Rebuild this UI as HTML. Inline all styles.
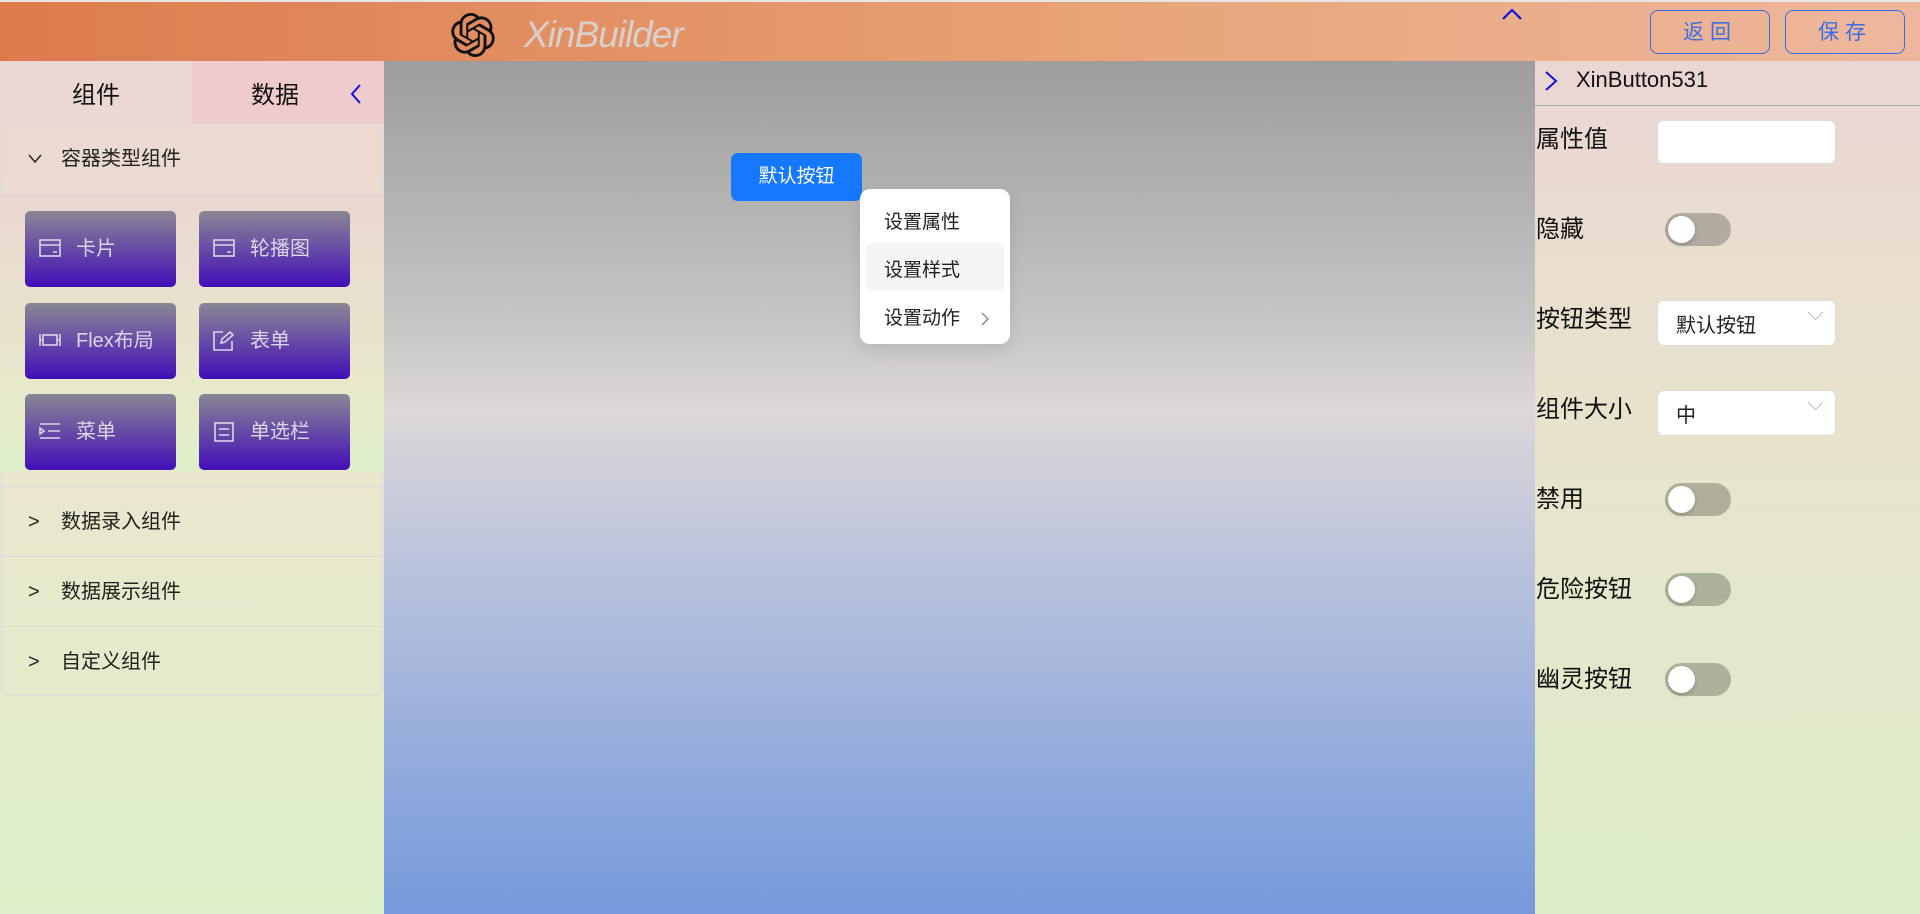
<!DOCTYPE html>
<html><head><meta charset="utf-8"><style>
*{box-sizing:border-box;margin:0;padding:0}
body{width:1920px;height:914px;overflow:hidden;position:relative;font-family:"Liberation Sans","Noto Sans CJK SC",sans-serif;}
.hdr{position:absolute;left:0;top:0;width:1920px;height:61px;background:linear-gradient(90deg,#dd7b4d,#e8a579 60%,#eeb79d);border-top:2px solid #e6e6e6}
.left{position:absolute;left:0;top:61px;width:384px;height:853px;background:linear-gradient(180deg,#ebd6d3,#eae7cc 50%,#ddefc8)}
.canvas{position:absolute;left:384px;top:61px;width:1151px;height:853px;background:linear-gradient(180deg,#9d9d9d 0%,#c6c5c3 30%,#dcd7d8 41%,#b9c2dc 60%,#7599dc 100%)}
.right{position:absolute;left:1535px;top:61px;width:385px;height:853px;background:linear-gradient(180deg,#ead6d3,#e8e4cc 45%,#ddedc8)}
.tab{position:absolute;top:0;height:63px;width:192px;text-align:center;line-height:70px;font-size:24px;color:#111}
.sec{position:absolute;left:0;width:384px;font-size:20px;color:#222}
.card{position:absolute;width:151px;height:76px;border-radius:5px;background:linear-gradient(180deg,#8a8794,#4a1ab4 90%,#420eb6);color:#dad6e6;font-size:20px;line-height:76px;padding-left:51px}
.card svg{position:absolute;left:14px;top:28px}
.lbl{position:absolute;left:1536px;font-size:24px;color:#111}
.tg{position:absolute;left:1665px;width:66px;height:33px;border-radius:17px;background:#b0aa9f}
.tg::after{content:"";position:absolute;left:3px;top:3px;width:27px;height:27px;border-radius:50%;background:#fff;box-shadow:0 2px 4px rgba(0,0,0,.2)}
.inp{position:absolute;left:1657px;width:179px;height:46px;background:#fff;border-radius:7px;border:1px solid #ddd;font-size:20px;color:#222;padding:8px 0 0 18px}
.inp i{position:absolute;right:14px;top:6px;width:11px;height:11px;border-right:1.5px solid #bbb;border-bottom:1.5px solid #bbb;transform:rotate(45deg)}
</style></head><body>
<div class="hdr">
<svg style="position:absolute;left:451px;top:11px" width="44" height="44" viewBox="0 0 24 24"><path fill="#111" d="M22.28 9.82a5.980 5.980 0 0 0-.52-4.910 6.050 6.050 0 0 0-6.510-2.900A6.070 6.070 0 0 0 4.980 4.180a5.980 5.980 0 0 0-4 2.900 6.050 6.050 0 0 0 .74 7.100 5.980 5.980 0 0 0 .51 4.910 6.050 6.050 0 0 0 6.520 2.900A5.980 5.980 0 0 0 13.260 24a6.060 6.060 0 0 0 5.770-4.210 5.990 5.990 0 0 0 4-2.900 6.060 6.060 0 0 0-.75-7.070zm-9.020 12.610a4.480 4.480 0 0 1-2.880-1.040l.14-.08 4.780-2.760a.8.8 0 0 0 .39-.68v-6.740l2.020 1.170a.07.07 0 0 1 .04.05v5.580a4.500 4.500 0 0 1-4.490 4.500zm-9.660-4.130a4.470 4.470 0 0 1-.53-3.010l.14.09 4.780 2.760a.77.77 0 0 0 .78 0l5.840-3.370v2.330a.08.08 0 0 1-.03.06L9.740 19.950a4.500 4.500 0 0 1-6.140-1.650zM2.340 7.900a4.490 4.490 0 0 1 2.370-1.970V11.600a.77.77 0 0 0 .39.68l5.810 3.350-2.020 1.170a.08.08 0 0 1-.07 0l-4.830-2.790A4.500 4.500 0 0 1 2.340 7.870zm16.600 3.860L13.100 8.360l2.020-1.160a.08.08 0 0 1 .07 0l4.830 2.790a4.490 4.490 0 0 1-.68 8.100v-5.680a.79.79 0 0 0-.41-.66zm2.010-3.020l-.14-.09-4.770-2.780a.78.78 0 0 0-.79 0L9.410 9.230V6.900a.07.07 0 0 1 .03-.06l4.830-2.790a4.500 4.500 0 0 1 6.680 4.660zM8.310 12.860l-2.020-1.160a.08.08 0 0 1-.04-.06V6.070a4.500 4.500 0 0 1 7.380-3.450l-.14.08-4.780 2.760a.8.8 0 0 0-.39.68zm1.100-2.370l2.600-1.500 2.610 1.500v3l-2.600 1.500-2.610-1.500z"/></svg>
<div style="position:absolute;left:524px;top:12px;font-size:37px;font-style:italic;color:#d9d0cc;letter-spacing:-1px">XinBuilder</div>
<svg style="position:absolute;left:1501px;top:5px" width="22" height="14" viewBox="0 0 22 14"><path d="M2 12L11 3l9 9" fill="none" stroke="#1010e0" stroke-width="2.2"/></svg>
<div style="position:absolute;left:1650px;top:8px;width:120px;height:44px;border:1.5px solid #2f6fe8;border-radius:8px;color:#3b6fe6;font-size:21px;text-align:center;line-height:43px;letter-spacing:6px">返回</div>
<div style="position:absolute;left:1785px;top:8px;width:120px;height:44px;border:1.5px solid #2f6fe8;border-radius:8px;color:#3b6fe6;font-size:21px;text-align:center;line-height:43px;letter-spacing:6px">保存</div>
</div>
<div class="left">
<div class="tab" style="left:0">组件</div>
<div class="tab" style="left:192px;background:#f0cbcb;padding-right:26px">数据</div>
<svg style="position:absolute;left:349px;top:22px" width="14" height="22" viewBox="0 0 14 22"><path d="M11 2L3 11l8 9" fill="none" stroke="#1010e0" stroke-width="2"/></svg>
<div style="position:absolute;left:1px;top:63px;width:382px;height:572px;border:1px solid #dcdade;border-radius:10px"></div>
<div class="sec" style="top:63px;height:70px;line-height:70px;border-bottom:1px solid #e0dcdc"><svg style="position:absolute;left:28px;top:30px" width="14" height="10" viewBox="0 0 14 10"><path d="M1 1l6 7 6-7" fill="none" stroke="#222" stroke-width="1.5"/></svg><span style="position:absolute;left:61px">容器类型组件</span></div>
<div style="position:absolute;left:0;top:133px;width:384px;height:277px;background:linear-gradient(180deg,#ead7d1,#e7ebca 80%,#dcefc8)"></div>
<div class="card" style="left:25px;top:150px"><svg width="22" height="18" viewBox="0 0 22 18" fill="none" stroke="#dad6e6" stroke-width="1.6"><rect x="1" y="1" width="20" height="16"/><path d="M1 6h20M14 13h4"/></svg>卡片</div>
<div class="card" style="left:199px;top:150px"><svg width="22" height="18" viewBox="0 0 22 18" fill="none" stroke="#dad6e6" stroke-width="1.6"><rect x="1" y="1" width="20" height="16"/><path d="M1 6h20M14 13h4"/></svg>轮播图</div>
<div class="card" style="left:25px;top:242px"><svg width="22" height="18" viewBox="0 0 22 18" fill="none" stroke="#dad6e6" stroke-width="1.6"><path d="M1 3v12M21 3v12M1 9h3M18 9h3"/><rect x="4" y="4" width="14" height="10"/></svg>Flex布局</div>
<div class="card" style="left:199px;top:242px"><svg width="22" height="20" viewBox="0 0 22 20" fill="none" stroke="#dad6e6" stroke-width="1.6"><path d="M10 1H1v18h18V10M8 12l1-4 8-7 3 3-8 7z"/></svg>表单</div>
<div class="card" style="left:25px;top:333px"><svg width="22" height="18" viewBox="0 0 22 18" fill="none" stroke="#dad6e6" stroke-width="1.6"><path d="M1 2h20M9 9h12M1 16h20M1 6l4 3-4 3z"/></svg>菜单</div>
<div class="card" style="left:199px;top:333px"><svg width="22" height="20" viewBox="0 0 22 20" fill="none" stroke="#dad6e6" stroke-width="1.6"><rect x="2" y="1" width="18" height="18"/><path d="M6 7h10M6 13h10"/></svg>单选栏</div>
<div class="sec" style="top:425px;height:70px;line-height:70px;border-top:1px solid #dcd8dc"><span style="position:absolute;left:28px">&gt;</span><span style="position:absolute;left:61px">数据录入组件</span></div>
<div class="sec" style="top:495px;height:70px;line-height:70px;border-top:1px solid #dcd8dc"><span style="position:absolute;left:28px">&gt;</span><span style="position:absolute;left:61px">数据展示组件</span></div>
<div class="sec" style="top:565px;height:70px;line-height:70px;border-top:1px solid #dcd8dc"><span style="position:absolute;left:28px">&gt;</span><span style="position:absolute;left:61px">自定义组件</span></div>
</div>
<div class="canvas">
<div style="position:absolute;left:347px;top:92px;width:131px;height:48px;background:#1677ff;border-radius:7px;color:#fff;font-size:19px;text-align:center;line-height:48px">默认按钮</div>
<div style="position:absolute;left:476px;top:128px;width:150px;height:155px;background:#fff;border-radius:10px;box-shadow:0 6px 16px rgba(0,0,0,.1);font-size:19px;color:#222">
<div style="position:absolute;left:6px;top:54px;width:138px;height:48px;background:#f4f4f4;border-radius:6px"></div>
<div style="position:absolute;left:24px;top:18px">设置属性</div>
<div style="position:absolute;left:24px;top:66px">设置样式</div>
<div style="position:absolute;left:24px;top:114px">设置动作</div>
<svg style="position:absolute;left:120px;top:122px" width="10" height="16" viewBox="0 0 10 16"><path d="M2 2l6 6-6 6" fill="none" stroke="#888" stroke-width="1.4"/></svg>
</div>
</div>
<div class="right">
<svg style="position:absolute;left:8px;top:9px" width="16" height="22" viewBox="0 0 16 22"><path d="M3 2l10 9-10 9" fill="none" stroke="#1010e0" stroke-width="2"/></svg>
<div style="position:absolute;left:41px;top:6px;font-size:22px;color:#111">XinButton531</div>
<div style="position:absolute;left:0;top:44px;width:385px;border-top:1.5px solid #a9a9a9"></div>
</div>
<div class="lbl" style="top:119px">属性值</div>
<div class="inp" style="top:120px;height:44px"></div>
<div class="lbl" style="top:209px">隐藏</div>
<div class="tg" style="top:213px"></div>
<div class="lbl" style="top:299px">按钮类型</div>
<div class="inp" style="top:300px">默认按钮<i></i></div>
<div class="lbl" style="top:389px">组件大小</div>
<div class="inp" style="top:390px">中<i></i></div>
<div class="lbl" style="top:479px">禁用</div>
<div class="tg" style="top:483px;background:#b0b09a"></div>
<div class="lbl" style="top:569px">危险按钮</div>
<div class="tg" style="top:573px;background:#afb29b"></div>
<div class="lbl" style="top:659px">幽灵按钮</div>
<div class="tg" style="top:663px;background:#adb29b"></div>
</body></html>
